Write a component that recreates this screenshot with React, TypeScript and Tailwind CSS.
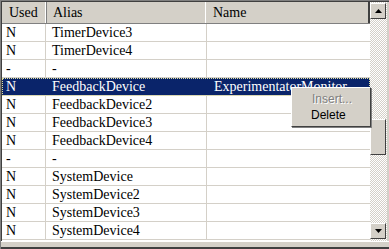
import React from 'react'

const rows: [string, string, string][] = [
    ['N', 'TimerDevice3', ''],
    ['N', 'TimerDevice4', ''],
    ['-', '-', ''],
    ['N', 'FeedbackDevice', 'ExperimentatorMonitor'],
    ['N', 'FeedbackDevice2', ''],
    ['N', 'FeedbackDevice3', ''],
    ['N', 'FeedbackDevice4', ''],
    ['-', '-', ''],
    ['N', 'SystemDevice', ''],
    ['N', 'SystemDevice2', ''],
    ['N', 'SystemDevice3', ''],
    ['N', 'SystemDevice4', ''],
]

function ArrowBtn({ up }: { up: boolean }) {
    return (
        <div className="w-[16px] h-[16px] bg-[#d4d0c8] border border-t-white border-l-white border-r-[#404040] border-b-[#404040] flex items-center justify-center">
            <svg width="7" height="4" viewBox="0 0 7 4">
                {up ? <path d="M3.5 0 L7 4 L0 4 Z" fill="#000" /> : <path d="M0 0 L7 0 L3.5 4 Z" fill="#000" />}
            </svg>
        </div>
    )
}

export default function App() {
    return (
        <div className="w-[389px] h-[249px] bg-[#d4d0c8] overflow-hidden relative font-['Liberation_Serif','Times_New_Roman',serif]">
            <div className="flex flex-col h-full border-l border-t border-[#808080]">
                <div className="flex flex-1 border-l border-t border-[#404040] min-h-0">
                    {/* table */}
                    <div className="w-[368px] bg-white flex flex-col">
                        <div className="flex h-[22px] text-[14px] text-black bg-[#d4d0c8] border-b border-[#808080]">
                            <div className="w-[44px] pl-[7px] flex items-center border-r border-white">Used</div>
                            <div className="w-[160px] pl-[6px] flex items-center border-r border-white border-l border-l-[#808080]">Alias</div>
                            <div className="flex-1 pl-[7px] flex items-center border-r-2 border-[#404040]">Name</div>
                        </div>
                        {rows.map((r, i) => {
                            const sel = i === 3
                            return (
                                <div
                                    key={i}
                                    className={`flex h-[18px] text-[14px] leading-[18px] border-b border-[#d4d0c8] ${sel ? 'bg-[#0a246a] text-white outline-1 outline-dotted outline-offset-[-1px] outline-[#e0e0a0]' : 'text-black'}`}
                                >
                                    <div className={`w-[44px] pl-[4px] ${sel ? '' : 'border-r border-[#d4d0c8]'}`}>{r[0]}</div>
                                    <div className={`w-[161px] pl-[6px] ${sel ? '' : 'border-r border-[#d4d0c8]'}`}>{r[1]}</div>
                                    <div className="flex-1 pl-[7px] whitespace-nowrap overflow-hidden">{r[2]}</div>
                                </div>
                            )
                        })}
                    </div>
                    {/* vertical scrollbar */}
                    <div className="w-[17px] flex flex-col bg-[repeating-conic-gradient(#d4d0c8_0_25%,#ffffff_0_50%)] bg-[length:2px_2px] pt-[1px]">
                        <ArrowBtn up />
                        <div className="h-[100px]" />
                        <div className="w-[16px] h-[36px] bg-[#d4d0c8] border border-t-white border-l-white border-r-[#404040] border-b-[#404040]" />
                        <div className="flex-1" />
                        <ArrowBtn up={false} />
                        <div className="h-[2px]" />
                    </div>
                </div>
                <div className="h-[6px] bg-[#d4d0c8] border-t border-white" />
                <div className="h-[2px] bg-[#404040]" />
            </div>
            {/* context menu */}
            <div className="absolute left-[291px] top-[87px] w-[80px] h-[40px] bg-[#d4d0c8] border border-t-white border-l-white border-r-[#404040] border-b-[#404040] shadow-[1px_1px_0_#808080] py-[3px] text-[12px] leading-[16px] font-['Liberation_Sans',Arial,sans-serif]">
                <div className="pl-[20px] text-[#808080] [text-shadow:1px_1px_0_#ffffff]">Insert...</div>
                <div className="pl-[19px] text-black">Delete</div>
            </div>
        </div>
    )
}
